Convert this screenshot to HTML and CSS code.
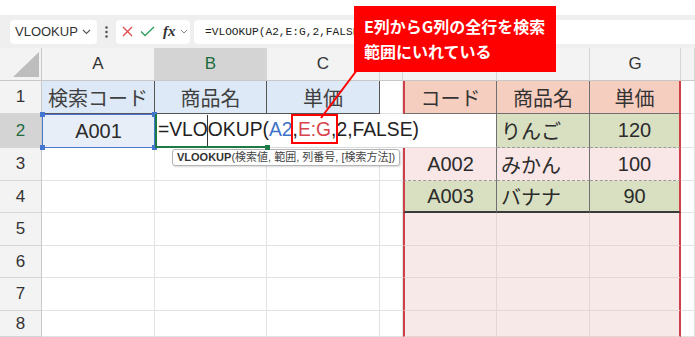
FILE: index.html
```html
<!DOCTYPE html>
<html lang="ja">
<head>
    <meta charset="UTF-8">
    <meta name="viewport" content="width=device-width, initial-scale=1.0">
    <title>VLOOKUP</title>
    <link rel="stylesheet" href="styles.css">
</head>
<body>
    <div class="app">
        <div class="top-gap"></div>

        <div class="toolbar">
            <div class="namebox">
                <span>VLOOKUP</span>
                <svg width="9" height="6" viewBox="0 0 9 6"><path d="M1 1l3.5 3.5L8 1" stroke="#555" stroke-width="1.1" fill="none"/></svg>
            </div>
            <div class="kebab">
                <svg width="3" height="12" viewBox="0 0 3 12"><circle cx="1.5" cy="1.5" r="1.3" fill="#555"/><circle cx="1.5" cy="6" r="1.3" fill="#555"/><circle cx="1.5" cy="10.5" r="1.3" fill="#555"/></svg>
            </div>
            <div class="fxbox">
                <svg class="ico-x" width="11" height="11" viewBox="0 0 11 11"><path d="M1 1L10 10M10 1L1 10" stroke="#e0474c" stroke-width="1.3"/></svg>
                <svg class="ico-ok" width="15" height="11" viewBox="0 0 15 11"><path d="M1 5.5L5 9.5L14 1" stroke="#2e9f5c" stroke-width="1.3" fill="none"/></svg>
                <i class="fx">fx</i>
                <svg width="8" height="5" viewBox="0 0 8 5"><path d="M1 1l3 3 3-3" stroke="#888" stroke-width="1" fill="none"/></svg>
            </div>
            <div class="formula">=VLOOKUP(A2,E:G,2,FALSE)</div>
        </div>

        <div class="sheet">
            <!-- header row (E and F letters sit under the callout) -->
            <div class="corner">
                <svg width="26" height="25" viewBox="0 0 26 25"><path d="M26 0V25H0Z" fill="#bdbdbd"/></svg>
            </div>
            <div class="ch">A</div>
            <div class="ch sel">B</div>
            <div class="ch">C</div>
            <div class="ch"></div>
            <div class="ch"></div>
            <div class="ch"></div>
            <div class="ch">G</div>
            <div class="ch"></div>

            <!-- 1 -->
            <div class="rh">1</div>
            <div class="c center lt-head">検索コード</div>
            <div class="c center lt-head">商品名</div>
            <div class="c center lt-head">単価</div>
            <div class="c"></div>
            <div class="c center rt-e rt-head">コード</div>
            <div class="c center rt-f rt-head">商品名</div>
            <div class="c center rt-g rt-head">単価</div>
            <div class="c"></div>

            <!-- 2 -->
            <div class="rh sel">2</div>
            <div class="c center ref-a2">
                A001
                <span class="knob k-tl"></span><span class="knob k-tr"></span>
                <span class="knob k-bl"></span><span class="knob k-br"></span>
            </div>
            <div class="c edit">
                <span class="txt">=VLO<span class="caret"></span>OKUP(<span class="ref-blue">A2</span><span class="ref-box">,<span class="ref-red">E:G</span>,</span>2,FALSE)</span>
                <div class="tip"><b>VLOOKUP</b>(検索値, 範囲, 列番号, [検索方法])</div>
            </div>
            <div class="c rt-f rt-green">りんご</div>
            <div class="c center rt-g rt-green">120</div>
            <div class="c"></div>

            <!-- 3 -->
            <div class="rh">3</div>
            <div class="c"></div>
            <div class="c"></div>
            <div class="c"></div>
            <div class="c"></div>
            <div class="c center rt-e rt-pink rt-dash">A002</div>
            <div class="c rt-f rt-pink rt-dash">みかん</div>
            <div class="c center rt-g rt-pink rt-dash">100</div>
            <div class="c"></div>

            <!-- 4 -->
            <div class="rh">4</div>
            <div class="c"></div>
            <div class="c"></div>
            <div class="c"></div>
            <div class="c"></div>
            <div class="c center rt-e rt-green rt-last">A003</div>
            <div class="c rt-f rt-green rt-last">バナナ</div>
            <div class="c center rt-g rt-green rt-last">90</div>
            <div class="c"></div>

            <!-- 5 - 8 -->
            <div class="rh">5</div>
            <div class="c"></div><div class="c"></div><div class="c"></div><div class="c"></div>
            <div class="c rt-e rt-empty"></div><div class="c rt-empty"></div><div class="c rt-g rt-empty"></div>
            <div class="c"></div>

            <div class="rh">6</div>
            <div class="c"></div><div class="c"></div><div class="c"></div><div class="c"></div>
            <div class="c rt-e rt-empty"></div><div class="c rt-empty"></div><div class="c rt-g rt-empty"></div>
            <div class="c"></div>

            <div class="rh">7</div>
            <div class="c"></div><div class="c"></div><div class="c"></div><div class="c"></div>
            <div class="c rt-e rt-empty"></div><div class="c rt-empty"></div><div class="c rt-g rt-empty"></div>
            <div class="c"></div>

            <div class="rh">8</div>
            <div class="c"></div><div class="c"></div><div class="c"></div><div class="c"></div>
            <div class="c rt-e rt-empty"></div><div class="c rt-empty"></div><div class="c rt-g rt-empty"></div>
            <div class="c"></div>
        </div>

        <div class="callout">E列からG列の全行を検索<br>範囲にいれている</div>
        <svg class="pointer" width="695" height="337" viewBox="0 0 695 337">
            <line x1="357" y1="70" x2="321" y2="118" stroke="#ff0000" stroke-width="2"/>
        </svg>
    </div>
</body>
</html>
```

FILE: styles.css
```css
body {
    margin: 0;
    font-family: "Liberation Sans", "Noto Sans CJK JP", sans-serif;
    color: #262626;
    background-color: #fff;
}

.app {
    position: relative;
    width: 695px;
    height: 337px;
    overflow: hidden;
    background-color: #fff;
}

.top-gap {
    height: 15px;
}

/* formula toolbar */
.toolbar {
    height: 33px;
    background-color: #efefef;
    display: flex;
    align-items: center;
    padding-left: 10px;
    box-sizing: border-box;
}

.namebox {
    width: 87px;
    height: 24px;
    background-color: #fff;
    border-radius: 4px;
    display: flex;
    align-items: center;
    justify-content: space-between;
    padding: 0 6px 0 5px;
    box-sizing: border-box;
    font-size: 13px;
    color: #333;
}

.kebab {
    width: 19px;
    display: flex;
    justify-content: center;
}

.fxbox {
    width: 74px;
    height: 24px;
    background-color: #fff;
    border-radius: 4px;
    display: flex;
    align-items: center;
    padding-left: 6px;
    box-sizing: border-box;
}

.ico-ok {
    margin-left: 7px;
}

.fx {
    font-family: "Liberation Serif", serif;
    font-size: 15px;
    font-weight: bold;
    color: #333;
    margin: 0 4px 0 8px;
}

.formula {
    flex: 1;
    height: 24px;
    margin-left: 4px;
    background-color: #fff;
    border-radius: 4px 0 0 4px;
    padding-left: 11px;
    font-family: "Liberation Mono", monospace;
    font-size: 11.2px;
    line-height: 24px;
    color: #222;
    white-space: nowrap;
}

/* sheet grid */
.sheet {
    display: grid;
    grid-template-columns: 42px 113px 112px 113px 23px 94px 93px 91px 14px;
    grid-template-rows: 33px 33px 34px 33px 32px 33px 32px 33px 26px;
}

.corner {
    background-color: #f3f3f3;
    border-right: 1px solid #c8c8c8;
    border-bottom: 1px solid #c8c8c8;
    display: flex;
    align-items: flex-end;
    justify-content: flex-end;
    padding: 0 2px 3px 0;
    box-sizing: border-box;
}

.ch {
    background-color: #f3f3f3;
    border-right: 1px solid #d6d6d6;
    border-bottom: 1px solid #c8c8c8;
    display: flex;
    align-items: center;
    justify-content: center;
    font-size: 17px;
    color: #333;
    box-sizing: border-box;
}

.rh {
    background-color: #f3f3f3;
    border-right: 1px solid #c8c8c8;
    border-bottom: 1px solid #d6d6d6;
    display: flex;
    align-items: center;
    justify-content: center;
    font-size: 17px;
    color: #333;
    box-sizing: border-box;
}

.ch.sel, .rh.sel {
    background-color: #d4d4d4;
    color: #1e6b3d;
}

.c {
    display: flex;
    align-items: center;
    padding: 0 4px;
    border-right: 1px solid #e2e2e2;
    border-bottom: 1px solid #e2e2e2;
    box-sizing: border-box;
    font-size: 20px;
    white-space: nowrap;
    color: #2b2b2b;
}

.center {
    justify-content: center;
}

/* left table */
.lt-head {
    background-color: #dde9f6;
    border-right: 1px solid #555;
    border-bottom: 1px solid #555;
    color: #404040;
}

.ref-a2 {
    position: relative;
    background-color: #e8eef8;
    border: 1px solid #4576d0;
}

.knob {
    position: absolute;
    width: 5px;
    height: 5px;
    background-color: #4576d0;
}

.k-tl { left: -3px; top: -3px; }
.k-tr { right: -3px; top: -3px; }
.k-bl { left: -3px; bottom: -3px; }
.k-br { right: -3px; bottom: -3px; }

/* cell in edit mode */
.edit {
    grid-column: span 4;
    position: relative;
    z-index: 3;
    background-color: #fff;
    border-left: 2px solid #1e7a44;
    border-right: 1px solid #707070;
    border-bottom: 1px solid #d9d9d9;
    padding-left: 1px;
    font-size: 19.3px;
    color: #222;
    overflow: visible;
}

.edit::before {
    content: "";
    position: absolute;
    left: -2px;
    bottom: -1px;
    width: 113px;
    height: 2px;
    background-color: #1e7a44;
}

.edit::after {
    content: "";
    position: absolute;
    left: 108px;
    bottom: -3px;
    width: 5px;
    height: 5px;
    background-color: #1e7a44;
}

.caret {
    display: inline-block;
    width: 0;
    height: 32px;
    border-left: 1px solid #333;
    vertical-align: middle;
    margin: 0 -0.5px;
}

.ref-blue {
    color: #3f73c9;
}

.ref-red {
    color: #d8434b;
}

.ref-box {
    border: 2px solid #ff0000;
    padding: 3px 0 2px;
    margin: 0 -2px;
}

.tip {
    position: absolute;
    left: 15px;
    top: 35px;
    height: 17px;
    padding: 0 4px;
    border: 1px solid #b4b4b4;
    border-radius: 3px;
    background-color: #fff;
    box-sizing: border-box;
    font-size: 11px;
    line-height: 15px;
    color: #444;
    white-space: nowrap;
    box-shadow: 1px 1px 2px rgba(0, 0, 0, 0.15);
}

.tip b {
    color: #333;
}

/* right table */
.rt-e {
    border-left: 2px solid #cf3f49;
    border-right: 1px solid #707070;
}

.rt-f {
    border-right: 1px solid #707070;
}

.rt-g {
    border-right: 2px solid #cf3f49;
}

.rt-head {
    background-color: #f6cec0;
    border-bottom: 1px solid #707070;
    color: #333;
}

.rt-green {
    background-color: #d9e0c2;
    border-bottom: 1px dashed #9a9a9a;
}

.rt-pink {
    background-color: #f9e6e6;
}

.rt-dash {
    border-bottom: 1px dashed #9a9a9a;
}

.rt-last {
    border-bottom: 2px solid #3a3a3a;
}

.rt-empty {
    background-color: #f8e9e9;
    border-bottom-color: #e6d5d5;
}

.rt-empty.rt-e {
    border-right-color: #e6d5d5;
}

.rt-empty:not(.rt-e):not(.rt-g) {
    border-right-color: #e6d5d5;
}

/* callout */
.callout {
    position: absolute;
    left: 354px;
    top: 6px;
    width: 202px;
    height: 66px;
    z-index: 10;
    background-color: #ff0000;
    color: #fff;
    font-family: "Noto Sans CJK JP", sans-serif;
    font-weight: bold;
    font-size: 16px;
    line-height: 25px;
    padding: 8px 0 0 10px;
    box-sizing: border-box;
}

.pointer {
    position: absolute;
    left: 0;
    top: 0;
    z-index: 9;
    pointer-events: none;
}
```
